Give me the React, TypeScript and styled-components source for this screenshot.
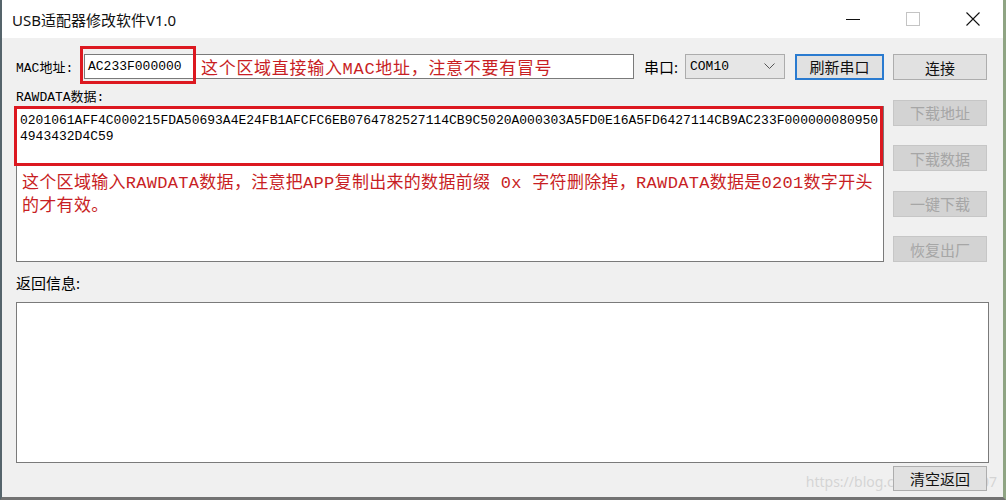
import styled, { createGlobalStyle } from 'styled-components'

const SANS = `"Noto Sans", "Noto Sans CJK SC", sans-serif`
const MONO = `"Liberation Mono", "Noto Sans CJK SC", monospace`
const NOTE_RED = '#c81e24'
const FRAME_RED = '#dc1820'

// advertising payload as it wraps in the edit box
const RAW_LINES = [
  '0201061AFF4C000215FDA50693A4E24FB1AFCFC6EB0764782527114CB9C5020A000303A5FD0E16A5FD6427114CB9AC233F000000080950',
  '4943432D4C59',
]

const GlobalStyle = createGlobalStyle`
  html, body {
    margin: 0;
    padding: 0;
    background: #f0f0f0;
  }
  body {
    width: 1006px;
    height: 500px;
    overflow: hidden;
  }
`

export default function App() {
  return (
    <>
      <GlobalStyle />
      <Window>
        <TitleBar>
          <Title>USB适配器修改软件V1.0</Title>
          <Controls>
            <ControlCell>
              <svg width="14" height="14" viewBox="0 0 14 14">
                <line x1="0" y1="7.5" x2="14" y2="7.5" stroke="#111" strokeWidth="1" />
              </svg>
            </ControlCell>
            <ControlCell>
              <svg width="14" height="14" viewBox="0 0 14 14">
                <rect x="0.5" y="0.5" width="13" height="13" fill="none" stroke="#c4c4c4" strokeWidth="1" />
              </svg>
            </ControlCell>
            <ControlCell>
              <svg width="14" height="14" viewBox="0 0 14 14">
                <path d="M0.5 0.5 L13.5 13.5 M13.5 0.5 L0.5 13.5" stroke="#111" strokeWidth="1.1" />
              </svg>
            </ControlCell>
          </Controls>
        </TitleBar>

        <Body>
          <TopGrid>
            <LeftColumn>
              <MacRow>
                <FieldLabel>MAC地址:</FieldLabel>
                <MacField>
                  <MacValue>AC233F000000</MacValue>
                  <Note>这个区域直接输入MAC地址，注意不要有冒号</Note>
                  <RedFrame $left={-5} $top={-9} $width={116} $height={38} />
                </MacField>
                <PortLabel>串口:</PortLabel>
                <Combo>
                  <span>COM10</span>
                  <svg width="11" height="7" viewBox="0 0 11 7">
                    <path d="M0.5 0.5 L5.5 5.5 L10.5 0.5" fill="none" stroke="#555" strokeWidth="1" />
                  </svg>
                </Combo>
                <Button $focused $width={89}>刷新串口</Button>
              </MacRow>

              <RawLabel>RAWDATA数据:</RawLabel>
              <RawArea>
                <RawData>
                  {RAW_LINES.map((line) => (
                    <div key={line}>{line}</div>
                  ))}
                </RawData>
                <RawNote>
                  这个区域输入RAWDATA数据，注意把APP复制出来的数据前缀 0x 字符删除掉，RAWDATA数据是0201数字开头
                  <br />
                  的才有效。
                </RawNote>
                <RedFrame $left={-3} $top={-1} $width={869} $height={60} />
              </RawArea>
            </LeftColumn>

            <ActionColumn>
              <Button>连接</Button>
              <Button disabled>下载地址</Button>
              <Button disabled>下载数据</Button>
              <Button disabled>一键下载</Button>
              <Button disabled>恢复出厂</Button>
            </ActionColumn>
          </TopGrid>

          <ReturnLabel>返回信息:</ReturnLabel>
          <ReturnArea />
          <Footer>
            <Watermark>https://blog.csdn.net/wx_307</Watermark>
            <Button $height={25}>清空返回</Button>
          </Footer>
        </Body>
      </Window>
    </>
  )
}

const Window = styled.div`
  width: 1006px;
  height: 500px;
  box-sizing: border-box;
  display: flex;
  flex-direction: column;
  border-left: 2px solid #55646b;
  border-right: 3px solid #8fa483;
  border-bottom: 3px solid #727272;
  background: #f0f0f0;
`

const TitleBar = styled.div`
  height: 38px;
  flex-shrink: 0;
  display: flex;
  align-items: center;
  padding-left: 10px;
  background: #ffffff;
  box-sizing: border-box;
`

const Title = styled.div`
  font-family: ${SANS};
  font-size: 15px;
  color: #111;
`

const Controls = styled.div`
  margin-left: auto;
  display: flex;
  height: 100%;
`

const ControlCell = styled.div`
  width: 60px;
  height: 100%;
  display: flex;
  align-items: center;
  justify-content: center;
`

const Body = styled.div`
  flex: 1;
  padding-left: 14px;
  display: flex;
  flex-direction: column;
`

const TopGrid = styled.div`
  display: grid;
  grid-template-columns: 868px 94px;
  column-gap: 9px;
  margin-top: 15px;
`

const LeftColumn = styled.div`
  display: flex;
  flex-direction: column;
`

const MacRow = styled.div`
  display: flex;
  align-items: center;
  height: 27px;
`

const FieldLabel = styled.div`
  width: 68px;
  font-family: ${MONO};
  font-size: 13px;
  color: #000;
  white-space: nowrap;
`

const MacField = styled.div`
  position: relative;
  width: 550px;
  height: 25px;
  box-sizing: border-box;
  display: flex;
  align-items: center;
  padding-left: 3px;
  background: #fff;
  border: 1px solid #7a7a7a;
`

const MacValue = styled.span`
  width: 113px;
  font-family: ${MONO};
  font-size: 13px;
  color: #000;
`

const Note = styled.span`
  font-family: ${MONO};
  font-size: 17px;
  letter-spacing: 0.7px;
  color: ${NOTE_RED};
  white-space: nowrap;
`

const RedFrame = styled.div<{ $left: number; $top: number; $width: number; $height: number }>`
  position: absolute;
  left: ${({ $left }) => $left}px;
  top: ${({ $top }) => $top}px;
  width: ${({ $width }) => $width}px;
  height: ${({ $height }) => $height}px;
  box-sizing: border-box;
  border: 3px solid ${FRAME_RED};
  pointer-events: none;
`

const PortLabel = styled.div`
  margin-left: 10px;
  width: 41px;
  font-family: ${SANS};
  font-size: 15px;
  color: #000;
  white-space: nowrap;
`

const Combo = styled.div`
  width: 100px;
  height: 25px;
  box-sizing: border-box;
  display: flex;
  align-items: center;
  justify-content: space-between;
  padding: 0 9px 0 4px;
  background: #e6e6e6;
  border: 1px solid #acacac;
  font-family: ${MONO};
  font-size: 13px;
  color: #000;
`

const Button = styled.button<{ $focused?: boolean; $width?: number; $height?: number }>`
  position: relative;
  width: ${({ $width }) => $width ?? 94}px;
  height: ${({ $height }) => $height ?? 26}px;
  margin: 0 0 0 ${({ $width }) => ($width ? 10 : 0)}px;
  padding: 0;
  box-sizing: border-box;
  font-family: ${SANS};
  font-size: 15px;
  color: #111;
  background: #e1e1e1;
  border: ${({ $focused }) => ($focused ? '2px solid #2a7bd0' : '1px solid #adadad')};

  &:disabled {
    color: #a6a6a6;
    background: #d3d3d3;
    border-color: #c6c6c6;
  }
`

const RawLabel = styled.div`
  margin-top: 9px;
  height: 17px;
  line-height: 17px;
  font-family: ${MONO};
  font-size: 13px;
  color: #000;
`

const RawArea = styled.div`
  position: relative;
  height: 156px;
  box-sizing: border-box;
  background: #fff;
  border: 1px solid #7a7a7a;
`

const RawData = styled.div`
  height: 58px;
  box-sizing: border-box;
  padding: 6px 0 0 3px;
  font-family: ${MONO};
  font-size: 13px;
  line-height: 16px;
  color: #000;
  white-space: nowrap;
`

const RawNote = styled.div`
  padding: 7px 0 0 5px;
  font-family: ${MONO};
  font-size: 17px;
  line-height: 23px;
  letter-spacing: 0.3px;
  color: ${NOTE_RED};
  white-space: nowrap;
`

const ActionColumn = styled.div`
  display: flex;
  flex-direction: column;
  justify-content: space-between;
  padding-top: 1px;
`

const ReturnLabel = styled.div`
  margin-top: 12px;
  height: 18px;
  line-height: 18px;
  font-family: ${SANS};
  font-size: 15px;
  color: #000;
`

const ReturnArea = styled.div`
  margin-top: 10px;
  width: 973px;
  height: 161px;
  box-sizing: border-box;
  background: #fff;
  border: 1px solid #7a7a7a;
`

const Footer = styled.div`
  position: relative;
  width: 971px;
  display: flex;
  justify-content: flex-end;
  margin-top: 3px;
`

// faint site stamp sitting over the bottom-right corner
const Watermark = styled.div`
  position: absolute;
  right: -10px;
  top: 6px;
  z-index: 0;
  font-family: ${SANS};
  font-size: 14px;
  color: rgba(200, 200, 200, 0.7);
  pointer-events: none;
  white-space: nowrap;
`
